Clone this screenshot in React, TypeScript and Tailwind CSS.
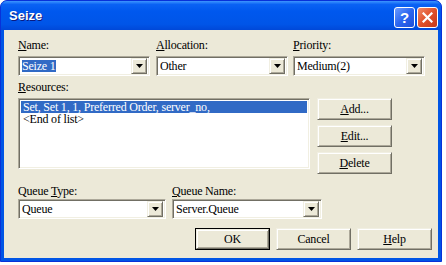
import React from "react";

const sunken =
  "border border-t-[#aca899] border-l-[#aca899] border-r-white border-b-white shadow-[inset_1px_1px_0_#716f64,inset_-1px_-1px_0_#f1efe2]";
const raised =
  "border border-t-[#f1efe2] border-l-[#f1efe2] border-r-[#716f64] border-b-[#716f64] shadow-[inset_1px_1px_0_#ffffff,inset_-1px_-1px_0_#aca899]";

function U({ children }: { children: React.ReactNode }) {
  return <span className="underline underline-offset-[1px]">{children}</span>;
}

function Combo({ w, text, selected }: { w: string; text: string; selected?: boolean }) {
  return (
    <div className={`${w} h-[20px] bg-white ${sunken} flex items-center pl-[3px] pr-[2px]`}>
      <div className="flex-1 overflow-hidden whitespace-nowrap">
        <span className={`inline-block h-[12px] leading-[12px] ${selected ? "bg-[#316ac5] text-white" : ""}`}>{text}</span>
      </div>
      <div className={`w-[16px] h-[16px] bg-[#ece9d8] ${raised} flex items-center justify-center`}>
        <svg width="7" height="4" viewBox="0 0 7 4">
          <path d="M0 0h7L3.5 4z" fill="#000" />
        </svg>
      </div>
    </div>
  );
}

function Btn({ children, def, w = "w-[75px]" }: { children: React.ReactNode; def?: boolean; w?: string }) {
  const inner = (
    <div className={`w-full h-full bg-[#ece9d8] ${raised} flex items-center justify-center`}>{children}</div>
  );
  return (
    <div className={`${w} h-[22px] ${def ? "border border-black" : ""}`}>{inner}</div>
  );
}

export default function App() {
  return (
    <div className="w-[446px] h-[265px] bg-white" style={{ fontFamily: "'Liberation Serif', serif" }}>
      <div className="w-[442px] h-[262px] rounded-t-[7px] bg-[#0055e5] border border-[#0831d9] flex flex-col overflow-hidden">
        {/* Title bar */}
        <div className="h-[29px] flex items-center pl-[8px] pr-[3px] bg-[linear-gradient(to_bottom,#3d95ff_0%,#0a62f4_12%,#0058ee_35%,#0055e8_80%,#0048d8_100%)]">
          <div
            className="flex-1 text-white font-bold text-[13px] [text-shadow:1px_1px_0_#0a1a80] pt-[1px]"
            style={{ fontFamily: "'Liberation Sans', 'DejaVu Sans', sans-serif" }}
          >
            Seize
          </div>
          <div className="flex gap-[2px] mt-[3px]">
            <div className="w-[21px] h-[21px] rounded-[3px] border border-white bg-[linear-gradient(135deg,#6b9bff_0%,#2b66f0_50%,#1d4fd8_100%)] flex items-center justify-center">
              <span className="text-white font-bold text-[15px] leading-none" style={{ fontFamily: "'Liberation Sans', sans-serif" }}>?</span>
            </div>
            <div className="w-[21px] h-[21px] rounded-[3px] border border-white bg-[linear-gradient(135deg,#f08a68_0%,#e0502a_50%,#c4381a_100%)] flex items-center justify-center">
              <svg width="11" height="11" viewBox="0 0 11 11">
                <path d="M1.5 1.5L9.5 9.5M9.5 1.5L1.5 9.5" stroke="#fff" strokeWidth="2.2" strokeLinecap="square" />
              </svg>
            </div>
          </div>
        </div>
        {/* Body */}
        <div className="flex-1 mx-[3px] mb-[3px] bg-[#ece9d8] text-[12px] leading-[14px] text-black tracking-[-0.2px] pl-[14px] pr-[6px] pt-[8px]">
          <div className="flex">
            <div className="w-[132px] mr-[6px]">
              <div className="h-[14px]"><U>N</U>ame:</div>
              <div className="mt-[4px]"><Combo w="w-[132px]" text="Seize 1" selected /></div>
            </div>
            <div className="w-[132px] mr-[5px]">
              <div className="h-[14px]"><U>A</U>llocation:</div>
              <div className="mt-[4px]"><Combo w="w-[132px]" text="Other" /></div>
            </div>
            <div className="w-[132px]">
              <div className="h-[14px]"><U>P</U>riority:</div>
              <div className="mt-[4px]"><Combo w="w-[132px]" text="Medium(2)" /></div>
            </div>
          </div>
          <div className="h-[14px] mt-[4px]"><U>R</U>esources:</div>
          <div className="flex items-start mt-[4px]">
            <div className={`w-[292px] h-[71px] bg-white ${sunken} p-[2px]`}>
              <div className="h-[12px] leading-[12px] bg-[#316ac5] text-white pl-[2px] whitespace-nowrap">Set, Set 1, 1, Preferred Order, server_no,</div>
              <div className="h-[12px] leading-[12px] pl-[2px]">&lt;End of list&gt;</div>
            </div>
            <div className="ml-[7px] flex flex-col gap-[5px]">
              <Btn><U>A</U>dd...</Btn>
              <Btn><U>E</U>dit...</Btn>
              <Btn><U>D</U>elete</Btn>
            </div>
          </div>
          <div className="flex mt-[10px]">
            <div className="w-[148px] mr-[6px]">
              <div className="h-[14px]">Queue <U>T</U>ype:</div>
              <div className="mt-[1px]"><Combo w="w-[148px]" text="Queue" /></div>
            </div>
            <div className="w-[150px]">
              <div className="h-[14px]"><U>Q</U>ueue Name:</div>
              <div className="mt-[1px]"><Combo w="w-[150px]" text="Server.Queue" /></div>
            </div>
          </div>
          <div className="flex justify-end gap-[6px] mt-[9px]">
            <Btn def>OK</Btn>
            <Btn>Cancel</Btn>
            <Btn><U>H</U>elp</Btn>
          </div>
        </div>
      </div>
    </div>
  );
}
